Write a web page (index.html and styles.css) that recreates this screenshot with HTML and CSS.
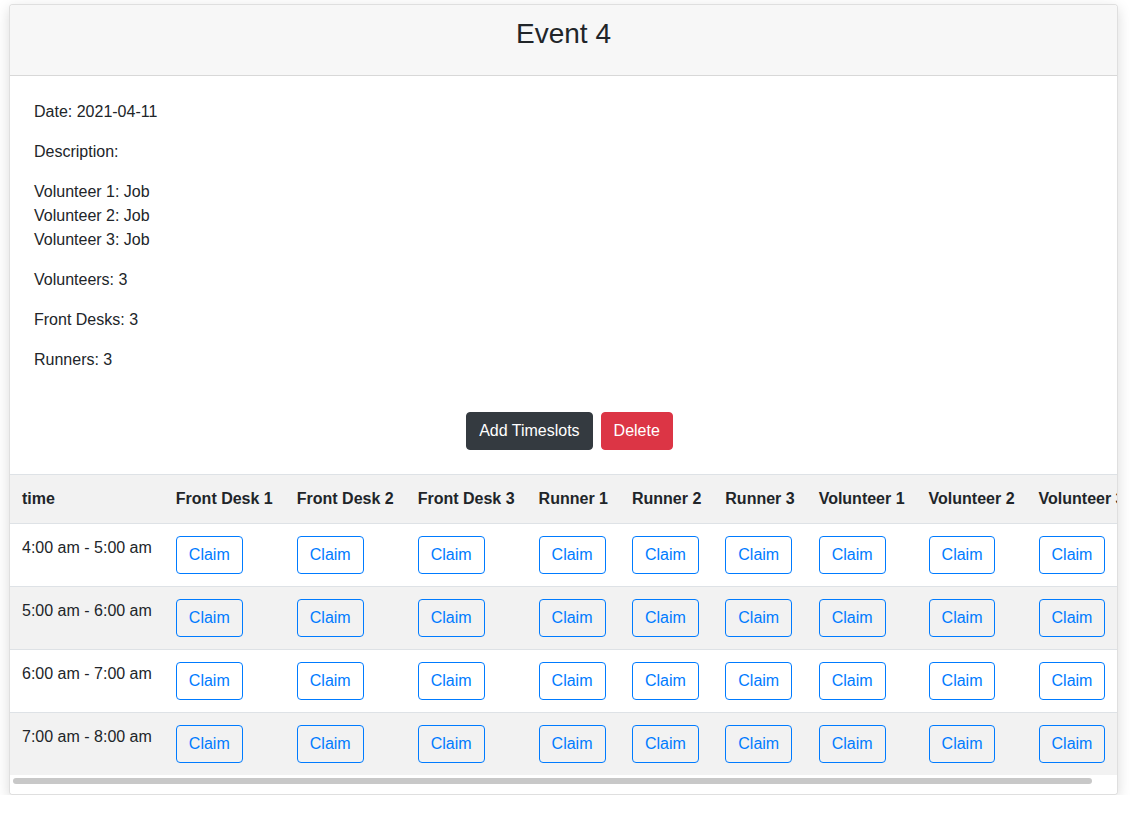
FILE: index.html
```html
<!DOCTYPE html>
<html lang="en">
<head>
<meta charset="utf-8">
<title>Event 4</title>
<link rel="stylesheet" href="styles.css">
</head>
<body>
<div class="card">
  <div class="card-header">
    <h3 class="card-title">Event 4</h3>
  </div>
  <div class="card-body">
    <p>Date: 2021-04-11</p>
    <p>Description:</p>
    <p>Volunteer 1: Job<br>Volunteer 2: Job<br>Volunteer 3: Job</p>
    <p>Volunteers: 3</p>
    <p>Front Desks: 3</p>
    <p>Runners: 3</p>
    <div class="actions">
      <button class="btn btn-dark">Add Timeslots</button>
      <button class="btn btn-danger">Delete</button>
    </div>
  </div>
  <div class="table-wrap">
    <table class="slots">
      <thead>
        <tr>
          <th>time</th>
          <th>Front Desk 1</th>
          <th>Front Desk 2</th>
          <th>Front Desk 3</th>
          <th>Runner 1</th>
          <th>Runner 2</th>
          <th>Runner 3</th>
          <th>Volunteer 1</th>
          <th>Volunteer 2</th>
          <th>Volunteer 3</th>
        </tr>
      </thead>
      <tbody>
        <tr>
          <td>4:00 am - 5:00 am</td>
          <td><button class="btn btn-outline">Claim</button></td>
          <td><button class="btn btn-outline">Claim</button></td>
          <td><button class="btn btn-outline">Claim</button></td>
          <td><button class="btn btn-outline">Claim</button></td>
          <td><button class="btn btn-outline">Claim</button></td>
          <td><button class="btn btn-outline">Claim</button></td>
          <td><button class="btn btn-outline">Claim</button></td>
          <td><button class="btn btn-outline">Claim</button></td>
          <td><button class="btn btn-outline">Claim</button></td>
        </tr>
        <tr>
          <td>5:00 am - 6:00 am</td>
          <td><button class="btn btn-outline">Claim</button></td>
          <td><button class="btn btn-outline">Claim</button></td>
          <td><button class="btn btn-outline">Claim</button></td>
          <td><button class="btn btn-outline">Claim</button></td>
          <td><button class="btn btn-outline">Claim</button></td>
          <td><button class="btn btn-outline">Claim</button></td>
          <td><button class="btn btn-outline">Claim</button></td>
          <td><button class="btn btn-outline">Claim</button></td>
          <td><button class="btn btn-outline">Claim</button></td>
        </tr>
        <tr>
          <td>6:00 am - 7:00 am</td>
          <td><button class="btn btn-outline">Claim</button></td>
          <td><button class="btn btn-outline">Claim</button></td>
          <td><button class="btn btn-outline">Claim</button></td>
          <td><button class="btn btn-outline">Claim</button></td>
          <td><button class="btn btn-outline">Claim</button></td>
          <td><button class="btn btn-outline">Claim</button></td>
          <td><button class="btn btn-outline">Claim</button></td>
          <td><button class="btn btn-outline">Claim</button></td>
          <td><button class="btn btn-outline">Claim</button></td>
        </tr>
        <tr>
          <td>7:00 am - 8:00 am</td>
          <td><button class="btn btn-outline">Claim</button></td>
          <td><button class="btn btn-outline">Claim</button></td>
          <td><button class="btn btn-outline">Claim</button></td>
          <td><button class="btn btn-outline">Claim</button></td>
          <td><button class="btn btn-outline">Claim</button></td>
          <td><button class="btn btn-outline">Claim</button></td>
          <td><button class="btn btn-outline">Claim</button></td>
          <td><button class="btn btn-outline">Claim</button></td>
          <td><button class="btn btn-outline">Claim</button></td>
        </tr>
      </tbody>
    </table>
  </div>
  <div class="scrollbar">
    <div class="scroll-thumb"></div>
  </div>
</div>
</body>
</html>
```

FILE: styles.css
```css
* {
  box-sizing: border-box;
}

html, body {
  margin: 0;
  background: #fff;
}

body {
  padding: 4px 12px 0 9px;
  font-family: "Liberation Sans", Arial, sans-serif;
  font-size: 16px;
  line-height: 24px;
  color: #212529;
}

.card {
  width: 1109px;
  background: #fff;
  border: 1px solid rgba(0, 0, 0, 0.125);
  border-radius: 4px;
  box-shadow: 0 4px 14px rgba(0, 0, 0, 0.15);
  overflow: hidden;
}

.card-header {
  background: #f7f7f7;
  border-bottom: 1px solid rgba(0, 0, 0, 0.125);
  padding: 12px 20px;
  text-align: center;
}

.card-title {
  margin: 0 0 12px;
  font-size: 28px;
  line-height: 33.6px;
  font-weight: 400;
}

.card-body {
  padding: 24px 24px 0;
}

.card-body p {
  margin: 0 0 16px;
}

.actions {
  display: flex;
  justify-content: center;
  gap: 8px;
  padding: 24px 0 24px 12px;
}

.btn {
  font-family: inherit;
  font-size: 16px;
  line-height: 24px;
  padding: 6px 12px;
  border: 1px solid transparent;
  border-radius: 4px;
  cursor: pointer;
  white-space: nowrap;
}

.btn-dark {
  background: #343a40;
  border-color: #343a40;
  color: #fff;
}

.btn-danger {
  background: #dc3545;
  border-color: #dc3545;
  color: #fff;
}

.btn-outline {
  background: transparent;
  border-color: #007bff;
  color: #007bff;
}

.table-wrap {
  overflow: hidden;
}

.slots {
  border-collapse: collapse;
}

.slots th,
.slots td {
  padding: 12px;
  border-top: 1px solid #dee2e6;
  text-align: left;
  white-space: nowrap;
}

.slots th {
  vertical-align: bottom;
  font-weight: 700;
}

.slots td {
  vertical-align: top;
}

.slots thead tr {
  background: #f2f2f2;
}

.slots tbody tr:nth-child(even) {
  background: #f2f2f2;
}

.slots td .btn {
  display: block;
}

.scrollbar {
  height: 19px;
  padding: 3px 0 0 3px;
  background: #fff;
}

.scroll-thumb {
  width: 1079px;
  height: 6px;
  border-radius: 3px;
  background: #c8c8c8;
}
```
